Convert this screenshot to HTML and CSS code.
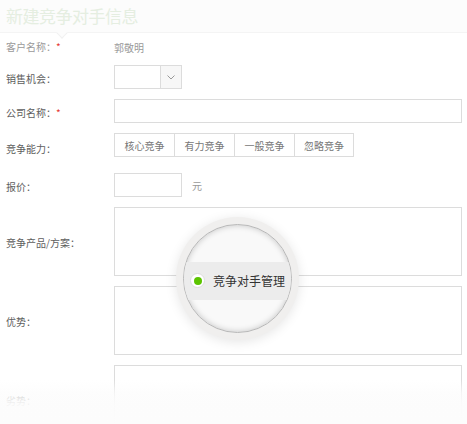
FILE: index.html
```html
<!DOCTYPE html>
<html lang="zh">
<head>
<meta charset="utf-8">
<link rel="stylesheet" href="styles.css">
</head>
<body>
<div class="page">
  <div class="header">
    <h1 class="title">新建竞争对手信息</h1>
    <span class="notch"></span>
  </div>
  <div class="form">
    <div class="row r1">
      <div class="label faint">客户名称：<span class="req">*</span></div>
      <div class="value">郭敬明</div>
    </div>
    <div class="row r2">
      <div class="label">销售机会：</div>
      <div class="select">
        <div class="select-text"></div>
        <div class="select-btn">
          <svg width="8" height="5" viewBox="0 0 8 5"><path d="M0.5 0.5 L4 4 L7.5 0.5" fill="none" stroke="#999" stroke-width="1"/></svg>
        </div>
      </div>
    </div>
    <div class="row">
      <div class="label">公司名称：<span class="req">*</span></div>
      <div class="input wide"></div>
    </div>
    <div class="row">
      <div class="label low">竞争能力：</div>
      <div class="btn-group">
        <div class="btn">核心竞争</div>
        <div class="btn">有力竞争</div>
        <div class="btn">一般竞争</div>
        <div class="btn">忽略竞争</div>
      </div>
    </div>
    <div class="row r5">
      <div class="label">报价：</div>
      <div class="input small"></div>
      <div class="unit">元</div>
    </div>
    <div class="row">
      <div class="label">竞争产品/方案：</div>
      <div class="textarea"></div>
    </div>
    <div class="row">
      <div class="label">优势：</div>
      <div class="textarea"></div>
    </div>
    <div class="row r8">
      <div class="label">劣势：</div>
      <div class="textarea"></div>
    </div>
  </div>
  <div class="fade"></div>
  <div class="magnifier">
    <div class="lens">
      <div class="band">
        <span class="dot"><span class="dot-in"></span></span>
        <span class="band-text">竞争对手管理</span>
      </div>
    </div>
  </div>
</div>
</body>
</html>
```
FILE: styles.css
```css
* { box-sizing: border-box; }
html, body { margin: 0; padding: 0; background: #fff; }
body {
  font-family: "Noto Sans CJK SC", "Noto Sans", sans-serif;
  width: 467px;
  height: 424px;
  overflow: hidden;
}
.page { position: relative; width: 467px; height: 424px; overflow: hidden; }
.header {
  position: relative;
  height: 33px;
  background: #fcfcfc;
  border-bottom: 1px solid #f4f4f4;
  padding-left: 6px;
  display: flex;
  align-items: center;
}
.title {
  margin: 0;
  font-size: 17px;
  font-weight: normal;
  color: #e5eee1;
  line-height: 20px;
  letter-spacing: -0.5px;
}
.notch {
  position: absolute;
  left: 58px;
  bottom: -5px;
  width: 8px;
  height: 8px;
  background: #fcfcfc;
  border-right: 1px solid #f1f1f1;
  border-bottom: 1px solid #f1f1f1;
  transform: rotate(45deg);
}
.form { padding-left: 6px; }
.row {
  display: flex;
  align-items: center;
  margin-top: 10px;
}
.r1 { margin-top: 2px; height: 24px; }
.r2 { margin-top: 6px; }
.r5 { margin-top: 16px; }
.label {
  width: 108px;
  flex: none;
  font-size: 10px;
  color: #5e5e5e;
  line-height: 14px;
  padding-top: 3px;
}
.label.low { padding-top: 7px; }
.label.faint { color: #9a9a9a; padding-top: 0; }
.req { color: #e53935; font-size: 10px; }
.value { font-size: 10px; color: #999; }
.select {
  width: 68px;
  height: 24px;
  border: 1px solid #dcdcdc;
  display: flex;
}
.select-text { flex: 1; background: #fff; }
.select-btn {
  width: 21px;
  border-left: 1px solid #dcdcdc;
  background: #f7f7f7;
  display: flex;
  align-items: center;
  justify-content: center;
}
.input {
  height: 24px;
  border: 1px solid #dcdcdc;
  background: #fff;
}
.wide { width: 348px; }
.small { width: 68px; }
.unit { margin-left: 10px; font-size: 10px; color: #999; padding-top: 1px; }
.btn-group {
  display: flex;
  height: 24px;
  border: 1px solid #dcdcdc;
}
.btn {
  width: 60px;
  display: flex;
  align-items: center;
  justify-content: center;
  font-size: 10px;
  color: #777;
  border-right: 1px solid #dcdcdc;
  background: #fff;
}
.btn:last-child { border-right: none; width: 58px; }
.textarea {
  width: 348px;
  height: 69px;
  border: 1px solid #dcdcdc;
  background: #fff;
}
.fade {
  position: absolute;
  left: 0;
  right: 0;
  top: 380px;
  bottom: 0;
  background: linear-gradient(to bottom, rgba(252,252,252,0) 0%, rgba(252,252,252,0.75) 30%, rgba(252,252,252,0.95) 55%, #fcfcfc 100%);
}
.magnifier {
  position: absolute;
  left: 176px;
  top: 217px;
  width: 123px;
  height: 123px;
  border-radius: 50%;
  background: #f0efee;
  box-shadow: 0 2px 12px rgba(0,0,0,0.1);
  display: flex;
  align-items: center;
  justify-content: center;
}
.lens {
  width: 109px;
  height: 109px;
  border-radius: 50%;
  border: 1px solid #b8b8b8;
  background: #f9f9f9;
  box-shadow: inset 0 0 6px rgba(0,0,0,0.22);
  overflow: hidden;
  display: flex;
  align-items: center;
}
.band {
  width: 100%;
  height: 38px;
  margin-top: 4px;
  background: #ececec;
  display: flex;
  align-items: center;
  padding-left: 6px;
}
.dot {
  width: 15px;
  height: 15px;
  border-radius: 50%;
  background: #fff;
  border: 1px solid #dcdcdc;
  display: flex;
  align-items: center;
  justify-content: center;
  flex: none;
}
.dot-in {
  width: 8px;
  height: 8px;
  border-radius: 50%;
  background: #5cc400;
}
.band-text {
  margin-left: 8px;
  font-size: 12px;
  color: #333;
  white-space: nowrap;
}
```
